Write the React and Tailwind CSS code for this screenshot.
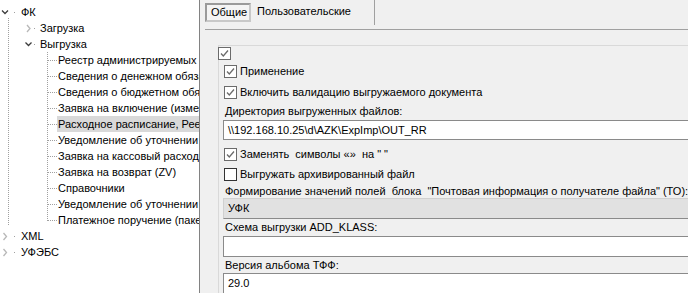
import React from "react";

const treeRows = [
  { level: 0, label: "ФК", state: "open", first: true },
  { level: 1, label: "Загрузка", state: "closed" },
  { level: 1, label: "Выгрузка", state: "open" },
  { level: 2, label: "Реестр администрируемых" },
  { level: 2, label: "Сведения о денежном обязательстве" },
  { level: 2, label: "Сведения о бюджетном обязательстве" },
  { level: 2, label: "Заявка на включение (изменение)" },
  { level: 2, label: "Расходное расписание, Реестр", selected: true },
  { level: 2, label: "Уведомление об уточнении" },
  { level: 2, label: "Заявка на кассовый расход" },
  { level: 2, label: "Заявка на возврат (ZV)" },
  { level: 2, label: "Справочники" },
  { level: 2, label: "Уведомление об уточнении" },
  { level: 2, label: "Платежное поручение (пакет)", last: true },
  { level: 0, label: "XML", state: "closed", noRoot: true },
  { level: 0, label: "УФЭБС", state: "closed", noRoot: true },
];

const guideWidth = { 0: 21, 1: 40, 2: 58 };

function Guide({ row }) {
  const w = guideWidth[row.level];
  const dot = { stroke: "#a0a0a0", strokeWidth: 1, strokeDasharray: "1 1", shapeRendering: "crispEdges" };
  const chevX = row.level === 0 ? 5 : 28.5;
  const dotX = row.level === 0 ? 14 : 34;

  return (
    <svg width={w} height="16" className="shrink-0">
      {/* root line */}
      {!row.noRoot && (
        <line x1="8.5" y1={row.first ? 14 : 0} x2="8.5" y2={row.last ? 13 : 16} {...dot} />
      )}
      {/* children of Выгрузка */}
      {row.level === 2 && (
        <>
          <line x1="47.5" y1="0" x2="47.5" y2={row.last ? 8.5 : 16} {...dot} />
          <line x1="48" y1="8.5" x2="57" y2="8.5" {...dot} />
        </>
      )}
      {row.state && (
        <rect x={dotX} y="8" width="1" height="1" fill="#a0a0a0" />
      )}
      {row.state === "open" && (
        <polyline
          points={`${chevX - 3},6.5 ${chevX},9.5 ${chevX + 3},6.5`}
          fill="none"
          stroke="#3c3c3c"
          strokeWidth="1.3"
        />
      )}
      {row.state === "closed" && (
        <polyline
          points={`${chevX - 1.5},5 ${chevX + 1.5},8.5 ${chevX - 1.5},12`}
          fill="none"
          stroke="#b8b8b8"
          strokeWidth="1.3"
        />
      )}
    </svg>
  );
}

function Checkbox({ checked }) {
  return (
    <span
      className={`w-[13px] h-[13px] shrink-0 border bg-white flex items-center justify-center ${
        checked ? "border-[#6b6b6b]" : "border-[#333333]"
      }`}
    >
      {checked && (
        <svg width="11" height="11" viewBox="0 0 11 11">
          <polyline points="2,5.5 4.3,8 9,2.5" fill="none" stroke="#6b6b6b" strokeWidth="1.3" />
        </svg>
      )}
    </span>
  );
}

function CheckRow({ checked, label, className }) {
  return (
    <div className={`flex items-center gap-[3px] pl-[5px] ${className}`}>
      <Checkbox checked={checked} />
      <span className="whitespace-pre">{label}</span>
    </div>
  );
}

function Field({ value, disabled, className }) {
  return (
    <div
      className={`ml-[4px] w-[520px] border border-[#8a8a8a] flex items-center pl-[4px] ${
        disabled ? "bg-[#e1e1e1] border-t-[#d0d0d0] border-l-[#d0d0d0]" : "bg-white"
      } ${className}`}
    >
      {value}
    </div>
  );
}

export default function App() {
  return (
    <div className="w-[688px] h-[293px] flex overflow-hidden bg-[#f0f0f0] text-[11px] text-black font-['Liberation_Sans',Arial,sans-serif] leading-none">
      {/* tree */}
      <div className="w-[200px] shrink-0 bg-white border-r border-[#828282] pt-[4px] overflow-hidden">
        {treeRows.map((row, i) => (
          <div key={i} className="h-[16px] flex items-center">
            <Guide row={row} />
            <span
              className={`h-[16px] flex items-center whitespace-nowrap pr-[40px] ${
                row.selected ? "bg-[#d9d9d9]" : ""
              } ${row.level === 2 ? "-ml-[1px] pl-[1px]" : ""}`}
            >
              {row.label}
            </span>
          </div>
        ))}
      </div>

      {/* settings */}
      <div className="flex-1 min-w-0 overflow-hidden">
        <div className="ml-[5px] h-[30px] border-b border-[#a0a0a0] flex items-start">
          <div className="mt-[3px] h-[19px] w-[46px] pl-[4px] flex items-center border-2 border-t-[#9a9a9a] border-l-[#9a9a9a] border-r-[#c8c8c8] border-b-[#c8c8c8] bg-[#f4f4f4]">
            Общие
          </div>
          <div className="h-[25px] w-[124px] pl-[6px] flex items-center pb-[2px] border-r border-[#a0a0a0]">
            Пользовательские
          </div>
        </div>

        <div className="ml-[18px] mt-[15px] border-t border-l border-[#d9d9d9]">
          <div className="h-[15px] pt-[1px] -ml-px">
            <Checkbox checked />
          </div>
          <CheckRow checked label="Применение" className="h-[21px]" />
          <CheckRow checked label="Включить валидацию выгружаемого документа" className="h-[20px]" />
          <div className="h-[18px] flex items-center pl-[6px]">Директория выгруженных файлов:</div>
          <Field value={"\\\\192.168.10.25\\d\\AZK\\ExpImp\\OUT_RR"} className="h-[20px]" />
          <CheckRow checked label={'Заменять  символы «»  на " "'} className="h-[24px] pt-[4px]" />
          <CheckRow label="Выгружать архивированный файл" className="h-[20px]" />
          <div className="h-[14px] flex items-center pl-[6px] whitespace-pre">
            {'Формирование значений полей  блока  "Почтовая информация о получателе файла" (ТО):'}
          </div>
          <Field value="УФК" disabled className="h-[21px]" />
          <div className="h-[17px] flex items-center pl-[6px]">Схема выгрузки ADD_KLASS:</div>
          <Field value="" className="h-[21px]" />
          <div className="h-[16px] flex items-center pl-[6px]">Версия альбома ТФФ:</div>
          <Field value="29.0" className="h-[21px]" />
        </div>
      </div>
    </div>
  );
}
